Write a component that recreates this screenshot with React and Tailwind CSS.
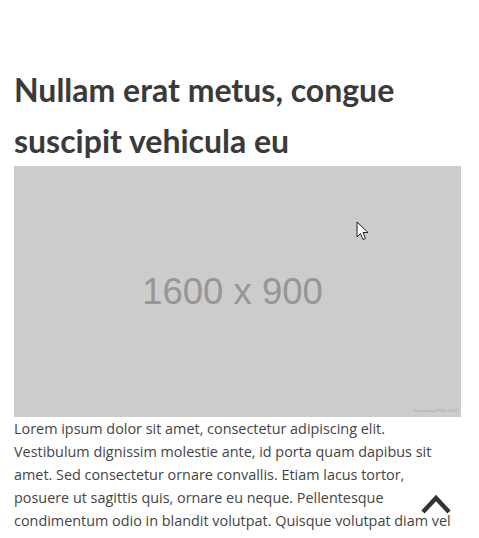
import React from "react";

export default function App() {
  return (
    <div className="relative min-h-[538px] bg-white">
      <div className="px-[14px] pt-[64px]">
        <h1 className="text-[32px] leading-[51px] font-bold text-[#3a3a3a]" style={{ fontFamily: 'Lato, sans-serif' }}>
          Nullam erat metus, congue suscipit vehicula eu
        </h1>
        <div className="relative flex h-[251px] w-[447px] items-center justify-center bg-[#cccccc]">
          <span className="mr-[10px] mt-[2px] text-[36.5px] text-[#969696]" style={{ fontFamily: '"Liberation Sans", Arial, sans-serif' }}>
            1600 x 900
          </span>
          <span className="absolute bottom-[3px] right-[4px] text-[4px] text-[#a8a8a8]" style={{ fontFamily: '"Liberation Sans", Arial, sans-serif' }}>
            Powered by HTML.COM
          </span>
          <svg className="absolute left-[342px] top-[55px]" width="14" height="20" viewBox="0 0 14 20">
            <path d="M1 1 L1 16 L4.5 12.5 L7 18.5 L9.5 17.5 L7 11.5 L12 11.5 Z" fill="#ffffff" stroke="#222" strokeWidth="1" strokeLinejoin="round" />
          </svg>
        </div>
        <p className="w-[441px] text-[14.4px] leading-[1.6] text-[#444444]" style={{ fontFamily: '"Open Sans", sans-serif' }}>
          Lorem ipsum dolor sit amet, consectetur adipiscing elit. Vestibulum dignissim molestie ante, id porta quam dapibus sit amet. Sed consectetur ornare convallis. Etiam lacus tortor, posuere ut sagittis quis, ornare eu neque. Pellentesque condimentum odio in blandit volutpat. Quisque volutpat diam vel lectus tristique, a pulvinar nunc ornare.
        </p>
      </div>
      <svg className="fixed left-[420px] top-[494px]" width="32" height="22" viewBox="0 0 32 22">
        <path d="M3 18 L16 4 L29 18" fill="none" stroke="#333" strokeWidth="4.5" />
      </svg>
    </div>
  );
}
